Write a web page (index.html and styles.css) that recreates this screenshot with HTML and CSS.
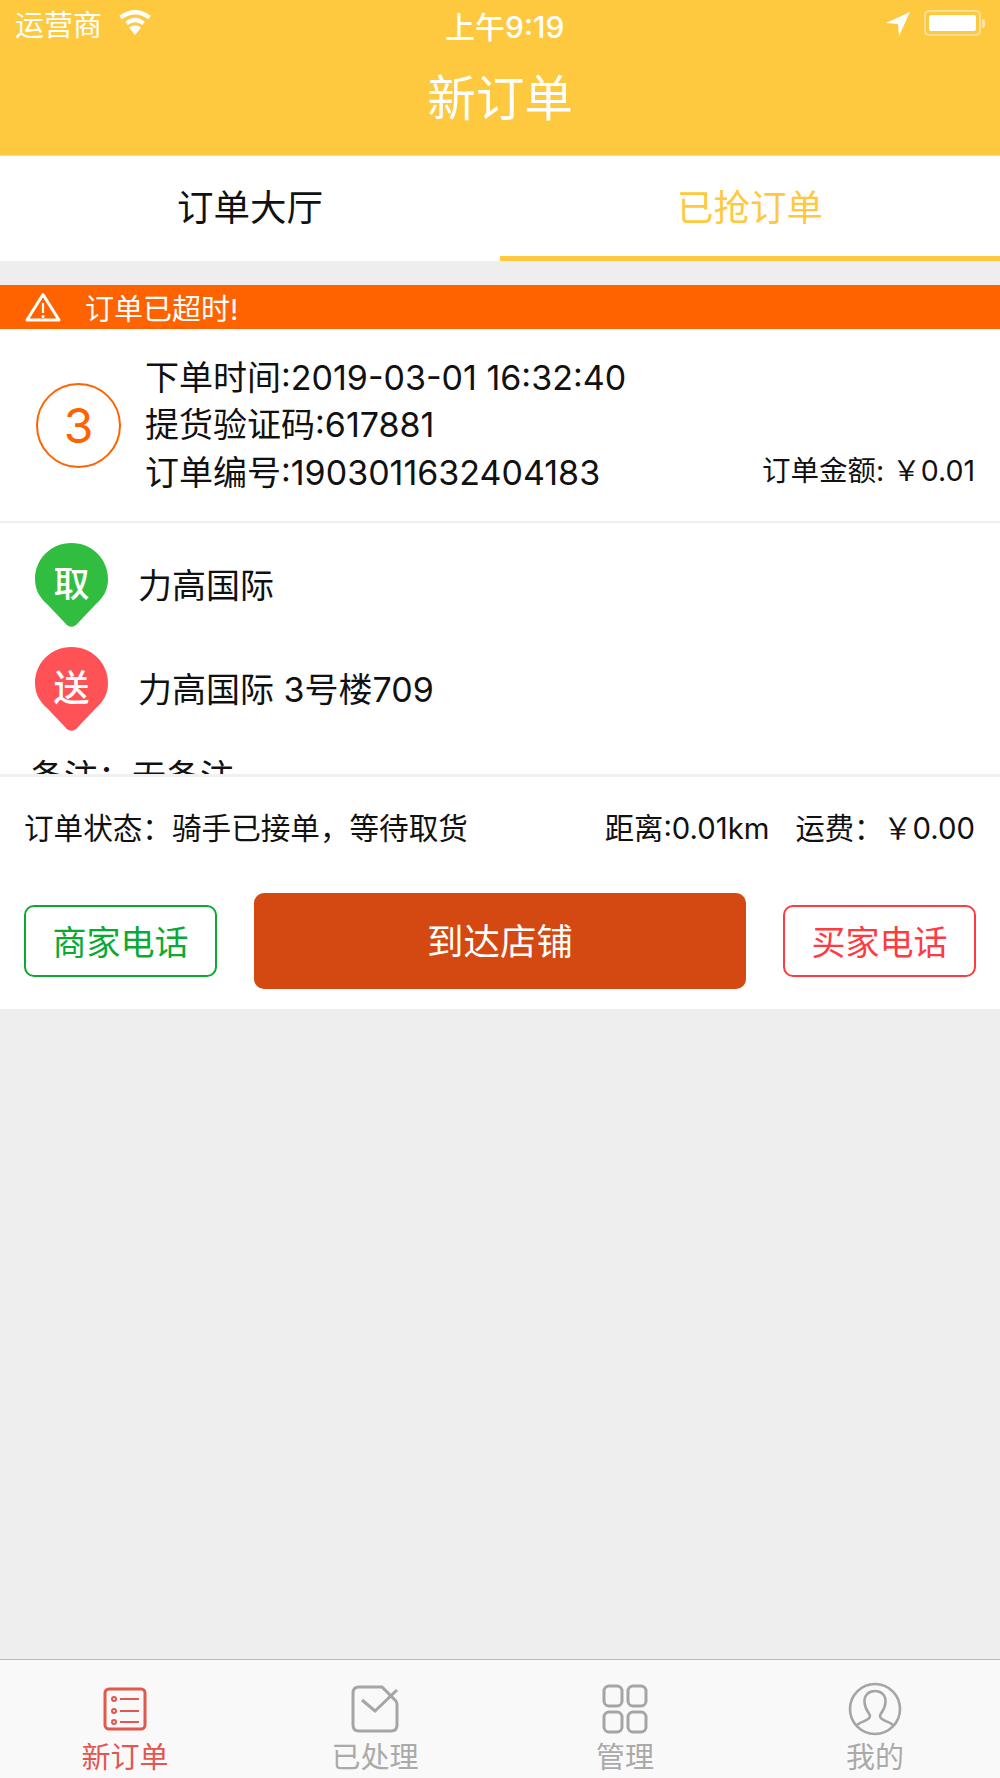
FILE: index.html
```html
<!DOCTYPE html>
<html lang="en">
<head>
    <meta charset="UTF-8">
    <meta name="viewport" content="width=device-width, initial-scale=1.0">
    <title>新订单</title>
    <link rel="stylesheet" href="styles.css">
</head>
<body>

<header class="top">
    <div class="status">
        <div class="status-left">
            <span>运营商</span>
            <svg class="wifi" width="34" height="25" viewBox="0 0 34 25">
                <path d="M17 25 L11 17.500 Q17 13 23 17.500 Z" fill="#fff"/>
                <path d="M8.500 13.500 Q17 6.500 25.500 13.500" fill="none" stroke="#fff" stroke-width="4.200"/>
                <path d="M2.500 7.500 Q17 -3 31.500 7.500" fill="none" stroke="#fff" stroke-width="4.200"/>
            </svg>
        </div>
        <span class="clock">上午9:19</span>
        <div class="status-right">
            <svg width="24" height="24" viewBox="0 0 24 24"><path d="M0 11 L24 0 L13 24 L12 12 Z" fill="#fff"/></svg>
            <div class="battery"><div class="battery-fill"></div></div>
            <div class="battery-tip"></div>
        </div>
    </div>
    <h1 class="title">新订单</h1>
</header>

<nav class="tabs">
    <div class="tab">订单大厅</div>
    <div class="tab active">已抢订单</div>
</nav>

<section class="order">
    <div class="alert">
        <svg width="36" height="30" viewBox="0 0 36 30">
            <path d="M18 2.500 L34 28 H2 Z" fill="none" stroke="#fff" stroke-width="3" stroke-linejoin="round"/>
            <path d="M18 11 V21" stroke="#fff" stroke-width="2.200"/>
            <circle cx="18" cy="24.500" r="1.500" fill="#fff"/>
        </svg>
        <span>订单已超时!</span>
    </div>

    <div class="order-head">
        <div class="num">3</div>
        <div class="lines">
            <div>下单时间:2019-03-01 16:32:40</div>
            <div>提货验证码:617881</div>
            <div>订单编号:1903011632404183</div>
        </div>
        <div class="amount">订单金额: ￥0.01</div>
    </div>

    <div class="route">
        <div class="stop">
            <div class="pin">
                <svg width="73" height="84" viewBox="0 0 73 84"><path d="M36.500 0 C57 0 73 16 73 36 C73 47 68 55 61 61 L43 80 C39 85 34 85 30 80 L12 61 C5 55 0 47 0 36 C0 16 16 0 36.500 0 Z" fill="#30bd40"/></svg>
                <span>取</span>
            </div>
            <div class="place">力高国际</div>
        </div>
        <div class="stop">
            <div class="pin">
                <svg width="73" height="84" viewBox="0 0 73 84"><path d="M36.500 0 C57 0 73 16 73 36 C73 47 68 55 61 61 L43 80 C39 85 34 85 30 80 L12 61 C5 55 0 47 0 36 C0 16 16 0 36.500 0 Z" fill="#ff5257"/></svg>
                <span>送</span>
            </div>
            <div class="place">力高国际 3号楼709</div>
        </div>
        <div class="note">备注：无备注</div>
    </div>

    <div class="panel">
        <div class="info">
            <span>订单状态：骑手已接单，等待取货</span>
            <div class="fees">
                <span>距离:0.01km</span>
                <span>运费：￥0.00</span>
            </div>
        </div>
        <div class="actions">
            <div class="btn-line green">商家电话</div>
            <div class="btn-main">到达店铺</div>
            <div class="btn-line red">买家电话</div>
        </div>
    </div>
</section>

<footer class="tabbar">
    <div class="bar-item on">
        <div class="bar-icon">
            <svg width="44" height="44" viewBox="0 0 44 44" fill="none" stroke="#e2574f" stroke-width="2">
                <rect x="2" y="2" width="40" height="40" rx="4" stroke-width="3"/>
                <circle cx="11" cy="12" r="2"/><circle cx="11" cy="24" r="2"/><circle cx="11" cy="35" r="2"/>
                <path d="M17 12 H36 M17 24 H36 M17 35 H36"/>
            </svg>
        </div>
        <span>新订单</span>
    </div>
    <div class="bar-item">
        <div class="bar-icon">
            <svg width="50" height="50" viewBox="0 0 50 50" fill="none" stroke="#a5a5a5" stroke-width="3">
                <path d="M32 3 H9 Q3 3 3 9 V41 Q3 47 9 47 H41 Q47 47 47 41 V20 Q47 18 45 16 L32 3 Z"/>
                <path d="M12 16 L25 27 L47 6"/>
            </svg>
        </div>
        <span>已处理</span>
    </div>
    <div class="bar-item">
        <div class="bar-icon">
            <svg width="46" height="50" viewBox="0 0 46 50" fill="none" stroke="#a5a5a5" stroke-width="3">
                <rect x="2" y="2" width="18" height="20" rx="5"/>
                <rect x="26" y="2" width="18" height="20" rx="5"/>
                <rect x="2" y="28" width="18" height="20" rx="5"/>
                <rect x="26" y="28" width="18" height="20" rx="5"/>
            </svg>
        </div>
        <span>管理</span>
    </div>
    <div class="bar-item">
        <div class="bar-icon">
            <svg width="54" height="54" viewBox="0 0 54 54" fill="none" stroke="#a5a5a5" stroke-width="2.600">
                <circle cx="27" cy="27" r="25"/>
                <path d="M8 44 C12 39 22 39 22 34 C22 31 17 29 16.500 20 C16 13 21 9 27 9 C33 9 38 13 37.500 20 C37 29 32 31 32 34 C32 39 42 39 46 44"/>
            </svg>
        </div>
        <span>我的</span>
    </div>
</footer>

</body>
</html>
```
FILE: styles.css
```css
*{
    margin: 0;
    padding: 0;
    box-sizing: border-box;
}
html, body{
    height: 100%;
    overflow: hidden;
}

body{
    font-family: Inter, "Noto Sans CJK SC", sans-serif;
    background: #eeeeee;
    color: #111;
    display: flex;
    flex-direction: column;
}

.top{
    height: 156px;
    background: #ffc93f;
    border-bottom: 1px solid #dcdcdc;
    color: #fff;
}
.status{
    height: 46px;
    padding: 0 15px;
    display: flex;
    justify-content: space-between;
    align-items: center;
    font-size: 29px;
    position: relative;
}
.status-left{
    display: flex;
    align-items: center;
    gap: 16px;
}
.wifi{
    margin-top: -2px;
}
.clock{
    position: absolute;
    left: 445px;
    top: 3px;
    font-size: 30px;
    font-weight: 500;
}
.status-right{
    display: flex;
    align-items: center;
}
.status-right svg{
    margin-right: 14px;
    margin-top: 2px;
}
.battery{
    width: 57px;
    height: 26px;
    border: 2px solid rgba(255,255,255,.45);
    border-radius: 5px;
    padding: 3px;
}
.battery-fill{
    height: 100%;
    background: #fff;
    border-radius: 2px;
}
.battery-tip{
    width: 3px;
    height: 9px;
    margin-left: 1px;
    background: rgba(255,255,255,.5);
    border-radius: 0 3px 3px 0;
}
.title{
    font-size: 48.500px;
    font-weight: 400;
    text-align: center;
    line-height: 106px;
}

.tabs{
    height: 105px;
    background: #fff;
    display: flex;
}
.tab{
    flex: 1;
    font-size: 36.500px;
    line-height: 105px;
    text-align: center;
    border-bottom: 5px solid transparent;
}
.tab.active{
    color: #ffc93f;
    border-bottom-color: #ffc93f;
}

.order{
    margin-top: 24px;
    background: #fff;
}
.alert{
    height: 44px;
    background: #ff6300;
    color: #fff;
    font-size: 29px;
    padding-left: 25px;
    display: flex;
    align-items: center;
    gap: 24px;
}

.order-head{
    height: 194px;
    padding: 0 25px 0 36px;
    border-bottom: 2px solid #f0f0f0;
    display: flex;
    align-items: center;
}
.num{
    width: 85px;
    height: 85px;
    border: 2px solid #ff6300;
    border-radius: 50%;
    color: #ff6300;
    font-size: 48px;
    line-height: 81px;
    text-align: center;
    margin-right: 24px;
}
.lines{
    flex: 1;
    font-size: 34px;
    line-height: 47.500px;
}
.amount{
    align-self: flex-end;
    font-size: 28.500px;
    margin-bottom: 32px;
}

.route{
    height: 254px;
    border-bottom: 3px solid #f0f0f0;
    padding: 20px 0 0 35px;
    overflow: hidden;
}
.stop{
    height: 104px;
    display: flex;
    gap: 30px;
}
.pin{
    width: 73px;
    height: 84px;
    display: grid;
    justify-items: center;
}
.pin svg, .pin span{
    grid-area: 1 / 1;
}
.pin span{
    color: #fff;
    font-size: 36px;
    font-weight: 500;
    line-height: 82px;
}
.place{
    font-size: 34px;
    line-height: 86px;
}
.note{
    font-size: 34px;
    margin: -1px 0 0 -5px;
}

.panel{
    height: 232px;
    padding: 0 24px;
}
.info{
    height: 98px;
    font-size: 29.600px;
    padding-right: 1px;
    display: flex;
    justify-content: space-between;
    align-items: center;
}
.fees{
    font-size: 29.300px;
    display: flex;
    gap: 26px;
}
.actions{
    margin-top: 18px;
    height: 96px;
    display: flex;
    justify-content: space-between;
    align-items: center;
}
.btn-line{
    width: 193px;
    height: 72px;
    border: 2px solid;
    border-radius: 10px;
    font-size: 34px;
    line-height: 71px;
    text-align: center;
}
.green{
    color: #0aaa32;
}
.red{
    color: #ff3b42;
}
.btn-main{
    width: 492px;
    height: 96px;
    background: #d44812;
    border-radius: 10px;
    color: #fff;
    font-size: 36.500px;
    line-height: 98px;
    text-align: center;
}

.tabbar{
    margin-top: auto;
    height: 119px;
    background: #f9f9f9;
    border-top: 1px solid #b9b9b9;
    display: flex;
}
.bar-item{
    flex: 1;
    height: 118px;
    color: #aaa;
    font-size: 29px;
    padding-top: 19px;
    display: flex;
    flex-direction: column;
    align-items: center;
    overflow: hidden;
}
.bar-icon{
    height: 60px;
    display: flex;
    align-items: center;
}
.bar-item span{
    line-height: 38px;
}
.bar-item.on{
    color: #e2574f;
}
```
